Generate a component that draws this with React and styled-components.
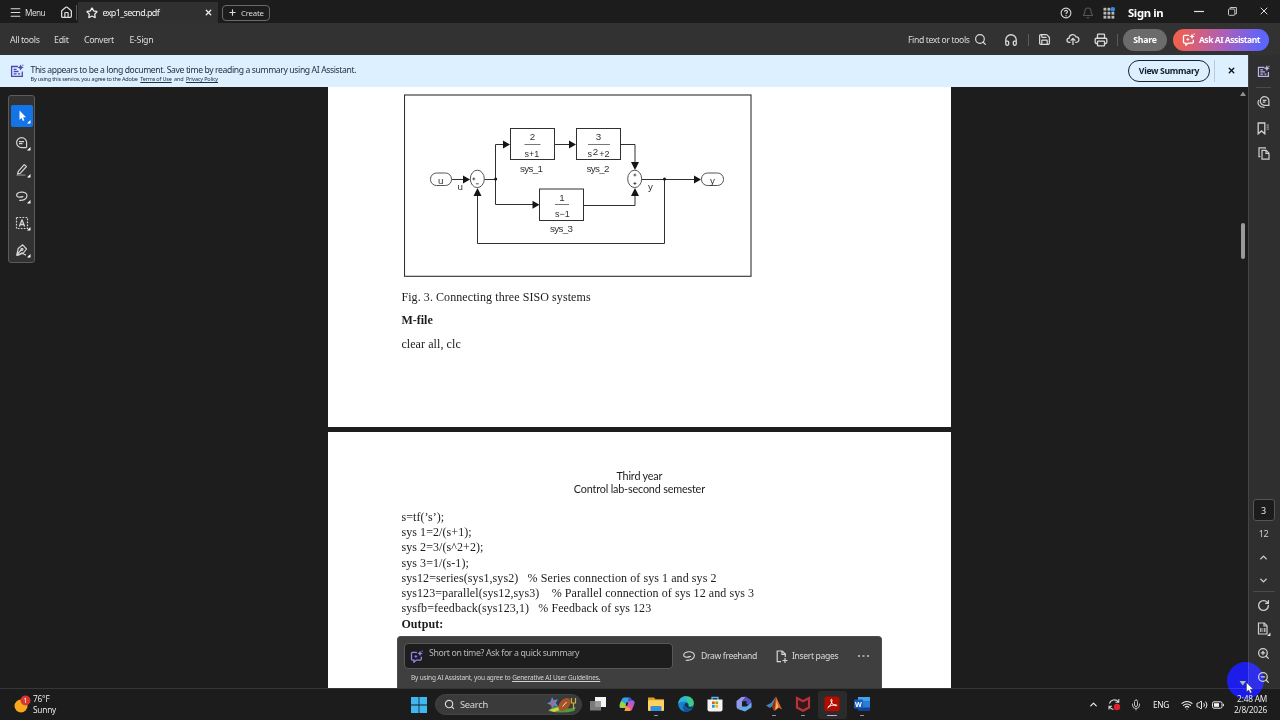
import React from 'react';
import styled, { createGlobalStyle } from 'styled-components';
import {
  Bell, ChevronDown, ChevronUp, Headphones, House, Menu, Mic, Plus,
  Printer, RotateCw, Save, Search, Star, Volume2, Wifi, X, ZoomIn, ZoomOut,
} from 'lucide-react';

const Global = createGlobalStyle`
  * { box-sizing: border-box; }
  body { margin: 0; background: #1d1d1d; overflow: hidden; }
  svg { display: block; flex: none; }
`;

const Screen = styled.div`
  position: relative;
  width: 1280px;
  height: 720px;
  display: flex;
  flex-direction: column;
  overflow: hidden;
  color: #dcdcdc;
  font-family: 'Noto Sans', 'Open Sans', sans-serif;
`;

const Label = styled.span`
  flex: none;
  width: ${p => (p.$w ? `${p.$w}px` : 'auto')};
  margin-left: ${p => p.$left || 0}px;
  font-size: ${p => p.$size || 9}px;
  font-weight: ${p => p.$weight || 400};
  letter-spacing: ${p => p.$track || 0}px;
  color: ${p => p.$color || 'inherit'};
  white-space: pre;
`;

const Slot = styled.span`
  flex: none;
  display: flex;
  justify-content: center;
  align-items: center;
  width: ${p => p.$w || 12}px;
  margin-left: ${p => p.$left || 0}px;
  margin-bottom: ${p => p.$lift || 0}px;
  color: ${p => p.$color || 'inherit'};
`;

const Rule = styled.span`
  flex: none;
  width: 1px;
  height: ${p => p.$h || 12}px;
  margin-left: ${p => p.$left || 0}px;
  background: ${p => p.$color || '#5a5a5a'};
`;

const Spacer = styled.span`
  flex: 1;
`;

const TitleBar = styled.header`
  flex: none;
  display: flex;
  align-items: center;
  height: 23px;
  padding: 2px 11px 0 10px;
  background: #1c1c1c;
`;

const Tab = styled.div`
  flex: none;
  display: flex;
  align-items: center;
  width: 140px;
  height: 21px;
  margin-left: 1px;
  padding-left: 8px;
  background: #303030;
  color: #f0f0f0;
`;

const CreateButton = styled.button`
  display: flex;
  align-items: center;
  width: 48px;
  height: 16px;
  margin: 0 0 0 4px;
  padding: 0 0 0 5px;
  background: none;
  border: 1px solid #6a6a6a;
  border-radius: 4px;
  color: #dcdcdc;
  font: inherit;
`;

const Toolbar = styled.nav`
  flex: none;
  display: flex;
  align-items: center;
  height: 32px;
  padding: 1px 11px 0 10px;
  background: #323232;
`;

const Pill = styled.button`
  flex: none;
  display: flex;
  align-items: center;
  justify-content: center;
  width: ${p => p.$w}px;
  height: 22px;
  margin: 0 0 0 ${p => p.$left}px;
  padding: 0;
  background: ${p => p.$bg};
  border: ${p => p.$border || '0'};
  border-radius: 11px;
  color: ${p => p.$color || '#fff'};
  font: inherit;
`;

const Body = styled.div`
  flex: none;
  display: flex;
  height: 633px;
`;

const Main = styled.main`
  position: relative;
  width: 1248px;
  display: flex;
  flex-direction: column;
`;

const Banner = styled.section`
  flex: none;
  display: flex;
  align-items: center;
  height: 32px;
  padding: 0 12px 1px 10px;
  background: #dcf0ff;
  color: #22303c;
`;

const BannerText = styled.div`
  display: flex;
  flex-direction: column;
  margin-left: 6.5px;
  padding-top: 6px;
`;

const BannerTitle = styled.div`
  height: 12.5px;
  font-size: 8.6px;
  line-height: 12px;
  letter-spacing: -0.37px;
  white-space: pre;
`;

const BannerNote = styled.div`
  height: 7px;
  font-size: 5.5px;
  line-height: 7px;
  letter-spacing: -0.19px;
  white-space: pre;
`;

const Viewer = styled.div`
  flex: 1;
  display: flex;
  min-height: 0;
  background: #1d1d1d;
`;

const Pages = styled.div`
  display: flex;
  flex-direction: column;
  gap: 5px;
  width: 623.4px;
  margin-left: 328px;
`;

const Sheet = styled.article`
  flex: none;
  height: ${p => p.$h}px;
  padding: ${p => p.$top}px 0 0 73.4px;
  overflow: hidden;
  background: #fff;
  color: #1c1c1c;
  font-family: 'Liberation Serif', serif;
`;

const Figure = styled.svg`
  margin: 0 0 9px 2.6px;
  font-family: 'Liberation Sans', sans-serif;
`;

const Paragraph = styled.p`
  height: 23.3px;
  margin: 0;
  font-size: 12px;
  font-weight: ${p => (p.$bold ? 700 : 400)};
  line-height: 23.3px;
  letter-spacing: ${p => (p.$bold ? 0 : 0.08)}px;
  white-space: pre;
`;

const PageHeader = styled.div`
  margin: 0 74px 14px 0;
  font-family: Lato, sans-serif;
  font-size: 10.8px;
  line-height: 13.4px;
  letter-spacing: -0.17px;
  text-align: center;
`;

const Code = styled.p`
  height: 15.25px;
  margin: 0;
  font-size: 12px;
  font-weight: ${p => (p.$bold ? 700 : 400)};
  line-height: 15.25px;
  letter-spacing: 0.08px;
  white-space: pre;
`;

const ScrollTrack = styled.div`
  display: flex;
  flex-direction: column;
  align-items: center;
  width: 11px;
  margin-left: auto;
  padding-top: 4px;
`;

const ScrollThumb = styled.div`
  width: 4px;
  height: 36px;
  margin-top: 127px;
  border-radius: 2px;
  background: #9a9a9a;
`;

const Palette = styled.aside`
  position: absolute;
  left: 8px;
  top: 40px;
  display: flex;
  flex-direction: column;
  align-items: flex-start;
  width: 27px;
  height: 168px;
  padding: 2px 0 0 1.5px;
  background: #323232;
  border: 1px solid #5b5b5b;
  border-radius: 3px;
`;

const Grip = styled.div`
  width: 22px;
  height: 3px;
  margin-bottom: 7px;
  background: #6c6e69;
`;

const Tool = styled.div`
  flex: none;
  display: flex;
  align-items: center;
  justify-content: center;
  width: 22px;
  height: 22px;
  margin-bottom: 4.8px;
  border-radius: 2px;
  background: ${p => (p.$active ? '#1473e6' : 'none')};
`;

const PromptPanel = styled.section`
  position: absolute;
  left: 397px;
  bottom: 0;
  width: 485px;
  height: 52px;
  padding: 6px 8px 0;
  background: #3f3f3f;
  border: 1px solid #4c4c4c;
  border-bottom: 0;
  border-radius: 4px 4px 0 0;
`;

const PromptRow = styled.div`
  display: flex;
  align-items: center;
  height: 26px;
`;

const PromptInput = styled.div`
  flex: none;
  display: flex;
  align-items: center;
  width: 269px;
  height: 26px;
  margin-left: -2px;
  padding-left: 5px;
  background: #1d1d1d;
  border: 1px solid #585858;
  border-radius: 4px;
`;

const PromptHint = styled.span`
  padding-bottom: 6px;
  margin-left: 6px;
  font-size: 8.8px;
  letter-spacing: -0.37px;
  white-space: nowrap;
  color: #b8b8b8;
`;

const PromptNote = styled.div`
  margin: 4px 0 0 5px;
  font-size: 6.5px;
  line-height: 9px;
  letter-spacing: -0.16px;
  white-space: pre;
  color: #d4d4d4;
`;

const Rail = styled.aside`
  width: 32px;
  display: flex;
  flex-direction: column;
  align-items: center;
  padding-right: 2px;
  background: #2f2f2f;
  border-left: 1px solid #454545;
  color: #d0d0d0;
`;

const RailItem = styled.div`
  flex: none;
  display: flex;
  align-items: center;
  justify-content: center;
  height: ${p => p.$h}px;
  font-size: 9px;
  letter-spacing: -0.3px;
`;

const RailRule = styled.div`
  flex: none;
  width: ${p => p.$w}px;
  height: 1px;
  background: #4b4b4b;
`;

const PageNumber = styled.div`
  flex: none;
  display: flex;
  align-items: center;
  justify-content: center;
  width: 22px;
  height: 22px;
  background: #1c1c1c;
  border: 1px solid #555;
  border-radius: 3px;
  font-size: 9px;
  color: #e6e6e6;
`;

const Taskbar = styled.footer`
  flex: none;
  display: flex;
  align-items: center;
  height: 32px;
  padding: 0 13px;
  background: #1c1c1c;
  border-top: 1px solid #363636;
  color: #f0f0f0;
`;

const Stack = styled.div`
  flex: none;
  width: ${p => p.$w}px;
  margin-left: ${p => p.$left}px;
  font-family: 'Open Sans', sans-serif;
  font-size: 8.3px;
  line-height: 10.3px;
  letter-spacing: -0.2px;
  text-align: ${p => p.$align || 'left'};
  white-space: nowrap;
`;

const StartButton = styled.div`
  margin-left: 348px;
`;

const SearchBox = styled.div`
  flex: none;
  display: flex;
  align-items: center;
  width: 147px;
  height: 21px;
  margin-left: 8px;
  padding-left: 8px;
  background: #3a3a3a;
  border: 1px solid #444;
  border-radius: 11px;
  color: #d8d8d8;
`;

const Apps = styled.div`
  display: flex;
  margin-left: 1px;
`;

const AppButton = styled.div`
  display: flex;
  flex-direction: column;
  align-items: center;
  width: 29.35px;
  height: 28px;
  padding-top: 5.5px;
  border-radius: 3px;
  background: ${p => (p.$active ? '#2b2b2b' : 'none')};
`;

const Running = styled.span`
  width: ${p => (p.$active ? 10 : 4)}px;
  height: 1.5px;
  margin-top: 2.5px;
  border-radius: 1px;
  background: ${p => (p.$active ? '#d3a4da' : '#9b9b9b')};
`;

// the click highlight tints what lies below it, text stays readable
const Halo = styled.div`
  position: absolute;
  left: 1227px;
  top: 662px;
  width: 37px;
  height: 37px;
  border-radius: 50%;
  background: #1a12ea;
  mix-blend-mode: lighten;
`;

const Pointer = styled.svg`
  position: absolute;
  left: 1239px;
  top: 680px;
`;

function SummaryIcon({ color, size = 14 }) {
  return (
    <svg width={size} height={size} viewBox="0 0 14 14" fill="none" stroke={color} strokeWidth="1.3">
      <path d="M8 2.5H1.6V12.3H12.3V7.5" />
      <path d="M3.6 5.3h3M3.6 7.5h5M3.6 9.8h3M8 9.8h2.2" />
      <path d="M10.6 0.4l1 2.1 2.1 1-2.1 1-1 2.1-1-2.1-2.1-1 2.1-1z" fill={color} stroke="none" />
      <path d="M12.9 0l.3 1 .8.3-.8.3-.3 1-.3-1-1-.3 1-.3z" fill={color} stroke="none" />
    </svg>
  );
}

function AssistantIcon({ color, size = 13 }) {
  return (
    <svg width={size} height={size} viewBox="0 0 14 14" fill="none" stroke={color} strokeWidth="1.4">
      <path d="M7.5 2.6H2.6q-1 0-1 1v6.2q0 1 1 1h1.6v2.3l2.6-2.3h4.4q1 0 1-1V7.4" />
      <path d="M10.8 .8l.9 2 2 .9-2 .9-.9 2-.9-2-2-.9 2-.9z" fill={color} stroke="none" />
      <path d="M13 0l.3.9.7.3-.7.3-.3.9-.3-.9-.7-.3.7-.3z" fill={color} stroke="none" />
      <path d="M6.3 5.4v3M4.8 6.9h3" strokeWidth="1" />
    </svg>
  );
}

function LassoIcon() {
  return (
    <svg width="12" height="12" viewBox="0 0 12 12" fill="none" stroke="#d6d6d6" strokeWidth="1.15" strokeLinecap="round">
      <path d="M3.200 10.300C7.500 10.600 11.400 8.800 11.400 5.500 11.400 2.500 8.200 1.500 5.400 1.800 2.600 2.200.7 3.700.7 5.300.8 7.600 4.600 7.600 7.400 6.400" />
    </svg>
  );
}

function HelpIcon() {
  return (
    <svg width="12" height="12" viewBox="0 0 12 12" fill="none" stroke="#d6d6d6" strokeWidth="1.1">
      <circle cx="6" cy="6" r="4.9" />
      <path d="M4.5 4.7c.1-1.8 3-1.8 3 0C7.5 5.8 6 5.8 6 7.1" />
      <circle cx="6" cy="8.7" r=".7" fill="#d6d6d6" stroke="none" />
    </svg>
  );
}

function AppGridIcon() {
  const dots = [1, 5, 9];
  return (
    <svg width="12" height="12" viewBox="0 0 12 12">
      {dots.map(y => dots.map(x => (
        <rect key={`${x}${y}`} x={x - 0.5} y={y - 0.2} width="2.8" height="2.8" fill="#b9b9b9" />
      )))}
      <circle cx="9.8" cy="2.2" r="2.2" fill="#2d8ceb" />
    </svg>
  );
}

function CloudIcon() {
  return (
    <svg width="14" height="13" viewBox="0 0 14 13" fill="none" stroke="#d6d6d6" strokeWidth="1.3">
      <path d="M4.6 9.3H3.2C.3 9.2.2 5.3 3.2 5.1 3.2 1 8.8.3 9.9 3.9c3.8-.2 4 5.3.4 5.4H9.2" />
      <path d="M7 12V5.4M4.7 7.6L7 5.3l2.3 2.3" />
    </svg>
  );
}

function RestoreIcon() {
  return (
    <svg width="9" height="9" viewBox="0 0 9 9" fill="none" stroke="#c4c4c4">
      <rect x=".5" y="2" width="6.3" height="6.3" rx=".8" />
      <path d="M2.2 1.8V.5h6.2v6.3H7" />
    </svg>
  );
}

function CommentsIcon() {
  return (
    <svg width="13" height="12" viewBox="0 0 13 12" fill="none" stroke="#d0d0d0" strokeWidth="1.2">
      <path d="M11.9 9.3V5.1A4.3 4.3 0 1 0 7.6 9.3z" />
      <path d="M1.9 4C-.3 7.5 2 11.4 7.5 11.3" />
      <path d="M5.8 4.3h3.7M5.8 6.2h2.6" />
    </svg>
  );
}

function BookmarkIcon() {
  return (
    <svg width="13" height="13" viewBox="0 0 13 13" fill="none" stroke="#d0d0d0" strokeWidth="1.3">
      <path d="M1.2 1h6.6v10.8L4.5 8.9l-3.3 2.9z" />
      <path d="M9.5 3.2H12M9.5 5.2H12M9.5 7.2H12" stroke="#8f8f8f" />
    </svg>
  );
}

function PagesIcon() {
  return (
    <svg width="12" height="13" viewBox="0 0 12 13" fill="none" stroke="#d0d0d0" strokeWidth="1.2">
      <path d="M4 3.3h4.2l2.8 2.9v5.9H4z" />
      <path d="M8 3.4v3h3" />
      <path d="M2.3 9.6H1V.9h6.3v.9" />
    </svg>
  );
}

function FitPageIcon() {
  return (
    <svg width="15" height="14" viewBox="0 0 15 14" fill="none" stroke="#d0d0d0" strokeWidth="1.2">
      <path d="M2.500 1h5.800l2.700 2.700V12H2.500z" />
      <path d="M8 1v3h3" />
      <path d="M4.800 6v4M8.800 6v4M6.800 6.600v.9M6.800 8.500v.9" />
      <path d="M14.500 10.500V14H11z" fill="#e0e0e0" stroke="none" />
    </svg>
  );
}

function InsertIcon() {
  return (
    <svg width="12" height="13" viewBox="0 0 12 13" fill="none" stroke="#d6d6d6" strokeWidth="1.2">
      <path d="M5 11.6H1.2V1h5L9.3 4v3" />
      <path d="M6 1v3.3h3.3M9 8v5M6.5 10.5h5" />
    </svg>
  );
}

// every palette glyph shares the small corner that opens the flyout
function PaletteGlyph({ children }) {
  return (
    <svg width="20" height="18" viewBox="0 0 20 18" fill="none" stroke="#d6d6d6" strokeWidth="1.2" strokeLinejoin="round">
      {children}
      <path d="M18.5 13v3.6h-3.6z" fill="#fff" stroke="none" />
    </svg>
  );
}

const tools = [
  <path key="pointer" d="M7.500 3.500v9.300l2.100-1.900 1.300 3 1.500-.7-1.300-2.900h2.900z" fill="#fff" stroke="none" />,
  <g key="comment"><path d="M14.600 13.500V8.600a5 5 0 1 0-5 5h5" /><path d="M7 7.600h5M7 9.600h3.500" /></g>,
  <g key="highlight"><path d="M6.300 10.300l5.900-6.700 2.200 1.900-5.900 6.700-3 .9z" /><path d="M4.500 14.100h9" stroke="#8a8a8a" /></g>,
  <path key="draw" d="M7.200 13.300C11.500 13.600 15 12 15 8.700 15 5.700 12 4.800 9.300 5.100 6.500 5.400 4.600 6.800 4.600 8.300c.1 2.300 3.900 2.300 6.700 1.100" />,
  <g key="text">
    <rect x="4.500" y="3.500" width="11" height="11" strokeDasharray="1.700 1.300" />
    <path d="M7.400 12.500L10 5.800l2.600 6.700M8.300 10.500h3.400" strokeWidth="1.300" />
  </g>,
  <g key="sign">
    <path d="M4.800 13.800L6.200 7.500l4.500-3.700 3.800 4.200-3.500 4.500zM5 13.500l4.500-5" />
    <circle cx="10" cy="8.300" r="1" />
    <path d="M4.500 14.300c4 .5 4-3 6-2.500 1.500.4.500 2.200 3.500 2" />
  </g>,
];

function Diagram() {
  return (
    <Figure width="348" height="183" viewBox="404 94 348 183">
      <g fill="none" stroke="#303030" strokeWidth="1">
        <rect x="404.500" y="95" width="346.500" height="181.300" strokeWidth="1.100" />
        <rect x="510.500" y="128.500" width="44" height="31" />
        <rect x="576.500" y="128.500" width="44" height="31" />
        <rect x="539.500" y="189" width="44" height="31.500" />
        <rect x="430.500" y="173" width="21" height="12.500" rx="6" stroke="#555" />
        <rect x="701.500" y="173" width="22" height="12.500" rx="6" stroke="#555" />
        <ellipse cx="477.300" cy="178.900" rx="7" ry="8.700" stroke="#555" />
        <ellipse cx="634.700" cy="178.900" rx="7" ry="8.700" stroke="#555" />
        <path d="M452 179.500h12M484.500 179.500h11M503 144.500h-7.500V204.500h38M554.500 144.500h15M620.500 144.500h14.500V162M583.500 205.500h51.500V196M642 179.500h54M664.500 179.500V243.500H477.500V196" />
        <path d="M524.500 144.500h16M588 144.500h22M555 204.500h14" stroke="#777" />
        <path d="M472.300 178.900h3M473.800 177.400v3M475.800 183.800h3M633.400 175h3M634.900 173.500v3M633.400 183.500h3M634.900 182v3" strokeWidth=".8" />
      </g>
      <g fill="#151515">
        <path d="M503 140.500v8l7-4zM569 140.500v8l7-4zM463 175.500v8l7-4zM532.500 200.700v8l7-4zM694 175.500v8l7-4z" />
        <path d="M631 162h8l-4 8zM631 196h8l-4-8zM473.500 196h8l-4-8z" />
        <circle cx="495.700" cy="178.900" r="1.500" />
        <circle cx="664.500" cy="178.900" r="1.500" />
      </g>
      <g fill="#333" fontSize="9.800" textAnchor="middle">
        <text x="532.500" y="140">2</text>
        <text x="532" y="157.300" fontSize="9">s+1</text>
        <text x="598.500" y="140">3</text>
        <text x="589.700" y="157.300" fontSize="9">s</text>
        <text x="595.500" y="155.300">2</text>
        <text x="604.500" y="157.300" fontSize="9">+2</text>
        <text x="562" y="201">1</text>
        <text x="562.300" y="217.300" fontSize="9">s−1</text>
        <text x="531.500" y="172" textLength="23">sys_1</text>
        <text x="598" y="172" textLength="23">sys_2</text>
        <text x="561.500" y="232" textLength="23">sys_3</text>
        <text x="440.700" y="184">u</text>
        <text x="460.300" y="189.500">u</text>
        <text x="650.500" y="189.500">y</text>
        <text x="712.500" y="184">y</text>
      </g>
    </Figure>
  );
}

const code = [
  's=tf(’s’);',
  'sys 1=2/(s+1);',
  'sys 2=3/(s^2+2);',
  'sys 3=1/(s-1);',
  'sys12=series(sys1,sys2)   % Series connection of sys 1 and sys 2',
  'sys123=parallel(sys12,sys3)    % Parallel connection of sys 12 and sys 3',
  'sysfb=feedback(sys123,1)   % Feedback of sys 123',
];

function WeatherIcon() {
  return (
    <svg width="19" height="20" viewBox="0 0 19 20">
      <circle cx="8" cy="11" r="6.500" fill="#f7a91c" />
      <circle cx="12.500" cy="5.500" r="5" fill="#d8362f" />
      <text x="12.500" y="8" fontSize="7" fill="#fff" textAnchor="middle">1</text>
    </svg>
  );
}

function SearchArt() {
  return (
    <svg width="32" height="18" viewBox="0 0 32 18">
      <path d="M2 15q7-7 14-4t14 0l-2 4q-12 3-26 0z" fill="#4f9b3c" />
      <path d="M3 14l10-3 3 2-8 3z" fill="#d9cf4a" />
      <path d="M6 1l1.800 3.200 4.200-1-2.200 3.800 2.200 3.300-4-.5-2 3.200-.9-4L1 7.500l3.500-1.800z" fill="#4c8fe0" />
      <path d="M6.500 4l1 2 2.500.2-2 1.600.6 2.400-2.100-1.400-2 1z" fill="#e2565c" />
      <ellipse cx="18.500" cy="8.500" rx="7.500" ry="4.800" transform="rotate(-48 18.500 8.500)" fill="#a45228" />
      <path d="M16.500 10.500l4-4.500" stroke="#f3e6d8" strokeWidth="1" />
      <path d="M25.500 2v5h4V2M27.500 7v6" stroke="#d0b13a" strokeWidth="1.200" fill="none" />
    </svg>
  );
}

const appIcons = [
  { id: 'view', art: <><rect x="5" y="1" width="11.500" height="10" fill="#f5f5f5" /><rect x="0" y="5" width="11" height="9.500" fill="#8b8b8b" opacity=".85" /></> },
  {
    id: 'copilot',
    art: (
      <>
        <path d="M5 1.500h5.500L8 9.500Q7.300 12 5 12H2.500Q0 12 .8 8.500L2.500 4Q3.300 1.500 5 1.500z" fill="#2aa7e8" />
        <path d="M.8 8.500L2 5l5.500 3.500L7 12H2.500Q0 12 .8 8.500z" fill="#a5cf3d" />
        <path d="M11 15H5.500L8 7q.7-2.500 3-2.500h2.500Q16 4.500 15.200 8l-1.700 4.500Q12.700 15 11 15z" fill="#e4559c" />
        <path d="M9 1.500h1.500q1.500 0 2 1.500l.5 1.500h-3z" fill="#3155dd" />
        <path d="M5.500 15L7 10.500l4 2L11 15z" fill="#f5a13a" />
        <path d="M11 4.500h2.500Q16 4.500 15.200 8l-.6 1.700-4.600-1z" fill="#9a62dc" />
        <path d="M7.500 6.200h1.800l-1 3.600H6.500z" fill="#1c1c1c" />
      </>
    ),
  },
  { id: 'files', on: true, art: <><path d="M0 1.500h6l1.500 1.700H16V9H0z" fill="#e0a027" /><rect x="0" y="4.200" width="16" height="10.800" rx="1" fill="#ffd45e" /><path d="M2.500 15v-4q0-1 1-1h9q1 0 1 1v4z" fill="#3a8edb" /></> },
  {
    id: 'edge',
    art: (
      <>
        <circle cx="8" cy="8" r="7.800" fill="#1581cf" />
        <path d="M.3 7.500C1 2.500 4.500.2 8.200.2c5 0 7.800 3.600 7.600 7-.2 2.800-3 4-5.500 3 .9-3-1-5-4-5S1 6.500.3 7.500z" fill="#3ccb8d" />
        <path d="M.3 7.500C1 2.500 4.500.2 8.200.2L9 5.900Q4 4 .3 7.500z" fill="#2bb5d6" />
        <path d="M6 8c-.5 3.500 3 6.500 8 4.500Q11 16 7.500 15.800 3.500 13 6 8z" fill="#0d4f9c" />
        <path d="M6.300 8.500Q7 6.500 9 7t1.300 3.200q1.700 1.600 4.700 0L14 12.500Q8 14 6.300 8.500z" fill="#1c1c1c" opacity=".75" />
      </>
    ),
  },
  { id: 'store', art: <><path d="M5 4V1.500h6V4" fill="none" stroke="#5bb8ec" strokeWidth="1.300" /><path d="M.5 3.500h15v10q0 2-2 2h-11q-2 0-2-2z" fill="#f3f3f3" /><path d="M5 5.500h2.700v2.700H5z" fill="#f25022" /><path d="M8.400 5.500h2.700v2.700H8.400z" fill="#7fba00" /><path d="M5 9h2.700v2.700H5z" fill="#00a4ef" /><path d="M8.400 9h2.700v2.700H8.400z" fill="#ffb900" /></> },
  { id: 'office', art: <><path d="M5.500 1L10 .8 6 5.500v6L1.500 13 .5 11V5z" fill="#8f9ae8" /><path d="M10 .8l5 3.200.5 5.500L10.500 8V5L6 5.500z" fill="#5a54c4" /><path d="M15.500 6.500v5L9 15.500 1.500 13 6 10.500l4.500 0z" fill="#61a8ec" /></> },
  { id: 'matlab', on: true, art: <><path d="M0 9.500L5 7l5-6.500L7.500 9 4 12z" fill="#3f87b5" /><path d="M10 .5Q12 5 16 13.500l-3.500-2L8.500 15 6 10.700z" fill="#e06a26" /><path d="M10 .5L8.500 15 6 10.700z" fill="#8c2f22" /><path d="M10.500 4l2 7.500-3 2.500z" fill="#f4b25a" /></> },
  { id: 'mcafee', on: true, art: <path d="M2 2l6 3.300L14 2v9.500l-6 3.300-6-3.300z" fill="#341719" stroke="#b8323a" strokeWidth="2.200" /> },
  { id: 'acrobat', on: true, active: true, art: <><rect x=".5" y=".5" width="15" height="14.800" rx="2.500" fill="#b30b00" /><path d="M3.500 12c2-1 4.500-5 4.500-7.500 0-2-1.500-1.500-1 .5.500 2.500 3 4.800 5 4.800 1.500 0 1-1.300-1-1-2.500.2-5 1-7 2.200" fill="none" stroke="#fff" strokeWidth="1" /></> },
  { id: 'word', on: true, art: <><rect x="4" y="1" width="12" height="14" rx="1" fill="#2b7cd3" /><path d="M4 1h12v3.800H4z" fill="#41a5ee" /><path d="M4 11.500h12V15H4z" fill="#103f91" /><rect x="0" y="3.500" width="9" height="9" rx="1" fill="#185abd" /><text x="4.500" y="10.500" fontSize="7" fontWeight="700" fill="#fff" textAnchor="middle">W</text></> },
];

export default function App() {
  return (
    <Screen>
      <Global />
      <TitleBar>
        <Slot $w={11}><Menu size={13} strokeWidth={2} /></Slot>
        <Label $left={4} $w={31} $size={8.2} $track={-0.5}>Menu</Label>
        <Slot $left={4} $w={13}><House size={13} strokeWidth={2.3} /></Slot>
        <Rule $left={3} $h={15} />
        <Tab>
          <Star size={12} strokeWidth={2.5} />
          <Label $left={4.5} $w={101.5} $size={9} $track={-0.65}>exp1_secnd.pdf</Label>
          <X size={9} strokeWidth={3.4} />
        </Tab>
        <CreateButton>
          <Plus size={9} strokeWidth={3} />
          <Label $left={4} $size={7.8} $track={-0.2}>Create</Label>
        </CreateButton>
        <Spacer />
        <Slot><HelpIcon /></Slot>
        <Slot $left={10} $color="#575757"><Bell size={12} strokeWidth={2.2} /></Slot>
        <Slot $left={9}><AppGridIcon /></Slot>
        <Label $left={13} $w={36} $size={11.3} $weight={700} $track={-0.35} $color="#fff">Sign in</Label>
        <Slot $left={30} $w={10} $lift={3}><svg width="10" height="3"><path d="M0 1.5h10" stroke="#e0e0e0" strokeWidth="1.2" /></svg></Slot>
        <Slot $left={24} $w={9} $lift={3}><RestoreIcon /></Slot>
        <Slot $left={22} $w={10} $lift={3}><X size={12} strokeWidth={2} /></Slot>
      </TitleBar>

      <Toolbar>
        <Label $w={44} $size={8.8} $track={-0.35}>All tools</Label>
        <Label $w={30} $size={8.8} $track={-0.25}>Edit</Label>
        <Label $w={45.5} $size={8.8} $track={-0.4}>Convert</Label>
        <Label $size={8.8} $track={-0.3}>E-Sign</Label>
        <Spacer />
        <Label $w={66} $size={8.6} $track={-0.36}>Find text or tools</Label>
        <Slot $w={13}><Search size={13} strokeWidth={2.2} /></Slot>
        <Slot $left={17} $w={14}><Headphones size={14} strokeWidth={2.2} /></Slot>
        <Rule $left={10} />
        <Slot $left={9} $w={13}><Save size={13} strokeWidth={2.2} /></Slot>
        <Slot $left={15} $w={14}><CloudIcon /></Slot>
        <Slot $left={14} $w={14}><Printer size={14} strokeWidth={2.2} /></Slot>
        <Rule $left={9} />
        <Pill $w={44} $left={5} $bg="#6b6b6b"><Label $size={8.7} $weight={700} $track={-0.2}>Share</Label></Pill>
        <Pill $w={96} $left={6} $bg="linear-gradient(100deg, #f0604f 5%, #b05fb4 50%, #5f64fb 90%)">
          <AssistantIcon color="#fff" />
          <Label $left={4} $size={8.5} $weight={700} $track={-0.44}>Ask AI Assistant</Label>
        </Pill>
      </Toolbar>

      <Body>
        <Main>
          <Banner>
            <SummaryIcon color="#4b46b5" />
            <BannerText>
              <BannerTitle>This appears to be a long document. Save time by reading a summary using AI Assistant.</BannerTitle>
              <BannerNote>By using this service, you agree to the Adobe  <u>Terms of Use</u>  and  <u>Privacy Policy</u></BannerNote>
            </BannerText>
            <Spacer />
            <Pill $w={82} $left={0} $bg="none" $border="1.5px solid #16222c" $color="#16222c">
              <Label $size={8.7} $weight={700} $track={-0.34}>View Summary</Label>
            </Pill>
            <Rule $left={4} $h={22} $color="#b9cbd8" />
            <Slot $left={11} $w={10} $color="#111"><X size={9} strokeWidth={3.6} /></Slot>
          </Banner>
          <Viewer>
            <Pages>
              <Sheet $h={340} $top={7}>
                <Diagram />
                <Paragraph>Fig. 3. Connecting three SISO systems</Paragraph>
                <Paragraph $bold>M-file</Paragraph>
                <Paragraph>clear all, clc</Paragraph>
              </Sheet>
              <Sheet $h={256} $top={37}>
                <PageHeader>Third year<br />Control lab-second semester</PageHeader>
                {code.map(line => <Code key={line}>{line}</Code>)}
                <Code $bold>Output:</Code>
              </Sheet>
            </Pages>
            <ScrollTrack>
              <svg width="6" height="5"><path d="M0 5l3-4.5L6 5z" fill="#8f8f8f" /></svg>
              <ScrollThumb />
            </ScrollTrack>
          </Viewer>
          <Palette>
            <Grip />
            {tools.map((glyph, i) => (
              <Tool key={glyph.key} $active={i === 0}><PaletteGlyph>{glyph}</PaletteGlyph></Tool>
            ))}
          </Palette>
          <PromptPanel>
            <PromptRow>
              <PromptInput>
                <AssistantIcon color="#8f86f2" />
                <PromptHint>Short on time? Ask for a quick summary</PromptHint>
              </PromptInput>
              <Slot $left={10}><LassoIcon /></Slot>
              <Label $left={6} $w={75} $size={8.6} $track={-0.32}>Draw freehand</Label>
              <Slot><InsertIcon /></Slot>
              <Label $left={4} $w={66} $size={8.6} $track={-0.35}>Insert pages</Label>
              <svg width="11" height="2"><path d="M0 1h2M4.5 1h2M9 1h2" stroke="#c8c8c8" strokeWidth="1.3" /></svg>
            </PromptRow>
            <PromptNote>By using AI Assistant, you agree to <u>Generative AI User Guidelines.</u></PromptNote>
          </PromptPanel>
        </Main>
        <Rail>
          <RailItem $h={32}><SummaryIcon color="#b9b3ee" size={13} /></RailItem>
          <RailRule $w={15} />
          <RailItem $h={28}><CommentsIcon /></RailItem>
          <RailItem $h={24}><BookmarkIcon /></RailItem>
          <RailItem $h={27}><PagesIcon /></RailItem>
          <Spacer />
          <PageNumber>3</PageNumber>
          <RailItem $h={24}>12</RailItem>
          <RailItem $h={24}><ChevronUp size={11} strokeWidth={3} /></RailItem>
          <RailItem $h={22}><ChevronDown size={11} strokeWidth={3} /></RailItem>
          <RailRule $w={22} />
          <RailItem $h={26}><RotateCw size={13} strokeWidth={2.4} /></RailItem>
          <RailItem $h={22}><FitPageIcon /></RailItem>
          <RailItem $h={26}><ZoomIn size={13} strokeWidth={2.3} /></RailItem>
          <RailItem $h={22}><ZoomOut size={13} strokeWidth={2.3} /></RailItem>
        </Rail>
      </Body>

      <Taskbar>
        <WeatherIcon />
        <Stack $w={30} $left={1}>76°F<br />Sunny</Stack>
        <StartButton>
          <svg width="16" height="16" viewBox="0 0 16 16">
            <path d="M0 0h7.6v7.6H0zM8.4 0H16v7.6H8.4zM0 8.4h7.6V16H0zM8.4 8.4H16V16H8.4z" fill="#3fb8f2" />
          </svg>
        </StartButton>
        <SearchBox>
          <Search size={11} strokeWidth={2.5} />
          <Label $left={5} $w={86} $size={9.4} $track={-0.3}>Search</Label>
          <SearchArt />
        </SearchBox>
        <Apps>
          {appIcons.map(app => (
            <AppButton key={app.id} $active={app.active}>
              <svg width="16" height="16" viewBox="0 0 16 16">{app.art}</svg>
              {app.on && <Running $active={app.active} />}
            </AppButton>
          ))}
        </Apps>
        <Spacer />
        <ChevronUp size={11} strokeWidth={2.6} />
        <Slot $left={9}>
          <svg width="13" height="13" viewBox="0 0 13 13" fill="none" stroke="#d6d6d6" strokeWidth="1.1">
            <path d="M1.5 5.5C2.5 1.5 8 .5 10.5 4M10.8 1v3.2H7.5M1 11.5V8.3h3M1.3 8.6Q2.5 11 5.5 11.5" />
            <circle cx="9" cy="9" r="3.2" fill="#e0222a" stroke="none" />
          </svg>
        </Slot>
        <Slot $left={11} $w={10} $color="#b9b9b9"><Mic size={12} strokeWidth={2} /></Slot>
        <Label $left={12} $w={28} $size={8.3} $track={-0.3}>ENG</Label>
        <Wifi size={12} strokeWidth={2.3} />
        <Slot $left={3}><Volume2 size={12} strokeWidth={2} /></Slot>
        <Slot $left={4}>
          <svg width="12" height="8" viewBox="0 0 12 8">
            <rect x=".5" y=".8" width="9.5" height="6.4" rx="1.5" fill="none" stroke="#e8e8e8" />
            <rect x="2" y="2.2" width="5" height="3.6" fill="#f5f5f5" />
            <path d="M11.4 2.8v2.4" stroke="#e8e8e8" />
          </svg>
        </Slot>
        <Stack $w={44} $left={-1} $align="right">2:48 AM<br />2/8/2026</Stack>
      </Taskbar>

      <Halo />
      <Pointer width="16" height="14" viewBox="0 0 16 14">
        <path d="M.5 1h6.5l-3.2 4.5z" fill="#a9c59a" />
        <path d="M7.5 2.5v9.3l2.2-1.9 1.5 3.3 1.6-.8-1.5-3.1h2.9z" fill="#fff" stroke="#222" strokeWidth=".4" />
      </Pointer>
    </Screen>
  );
}
